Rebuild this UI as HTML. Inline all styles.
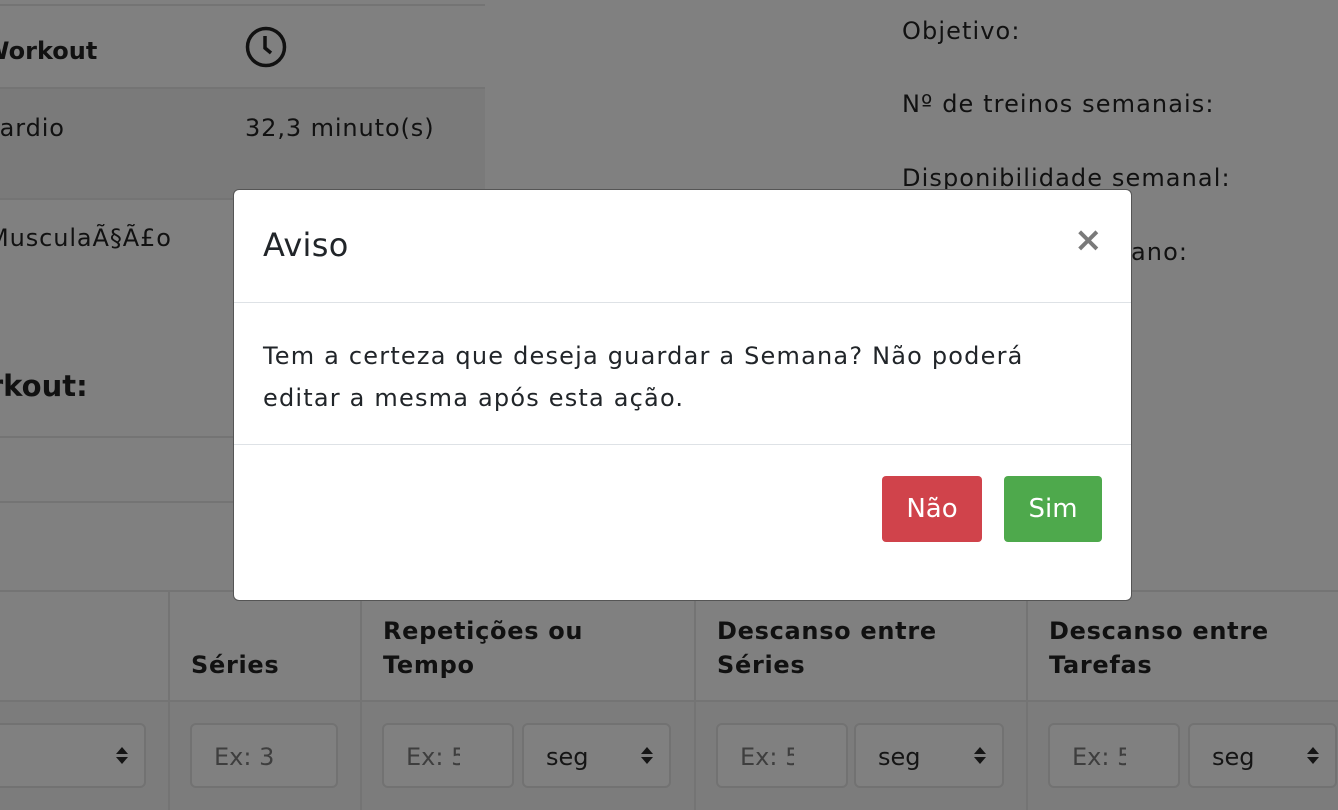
<!DOCTYPE html>
<html><head><meta charset="utf-8"><style>
*{margin:0;padding:0;box-sizing:border-box}
body{width:1338px;height:810px;overflow:hidden;background:#808080;font-family:"DejaVu Sans","Liberation Sans",sans-serif;color:#111;position:relative}
.a{position:absolute;white-space:nowrap}
.t{font-size:24px;color:#111;letter-spacing:0.9px}
.b{font-weight:bold}
.hl{position:absolute;height:2px;background:#747474}
.vl{position:absolute;width:2px;background:#747474}
.in{position:absolute;height:65px;border:2px solid #727272;border-radius:6px;background:#808080;font-size:24px;color:#3e3e3e;padding:18px 0 0 22px;overflow:hidden;white-space:nowrap}
.sel{color:#151515}
.arr{position:absolute;right:22px;top:22px;width:0;height:0}
.arr:before{content:"";position:absolute;left:-6px;top:0;border:6px solid transparent;border-bottom:7px solid #151515;border-top:0}
.arr:after{content:"";position:absolute;left:-6px;top:10px;border:6px solid transparent;border-top:7px solid #151515;border-bottom:0}
.h{font-size:24px;line-height:34px;font-weight:bold;letter-spacing:0.7px}
</style></head><body>
<div class="hl" style="left:0;top:4px;width:485px"></div>
<div class="a t b" style="left:-17px;top:37px;letter-spacing:0">Workout</div>
<svg class="a" style="left:244px;top:25px" width="44" height="44" viewBox="0 0 44 44"><circle cx="22" cy="22" r="18.5" fill="none" stroke="#111" stroke-width="3.5"/><path d="M21 11v12l6 5" fill="none" stroke="#111" stroke-width="3.5"/></svg>
<div class="a" style="left:0;top:88px;width:485px;height:110px;background:#7a7a7a"></div>
<div class="hl" style="left:0;top:87px;width:485px"></div>
<div class="a t" style="left:-18px;top:114px">Cardio</div>
<div class="a t" style="left:245px;top:114px">32,3 minuto(s)</div>
<div class="hl" style="left:0;top:198px;width:485px"></div>
<div class="a t" style="left:-12px;top:224px">MusculaÃ§Ã£o</div>
<div class="a b" style="left:-62px;top:369px;font-size:29px">Workout:</div>
<div class="hl" style="left:0;top:436px;width:485px"></div>
<div class="hl" style="left:0;top:501px;width:485px"></div>
<div class="a t" style="left:902px;top:17px;letter-spacing:1.1px">Objetivo:</div>
<div class="a t" style="left:902px;top:90px;letter-spacing:1.1px">Nº de treinos semanais:</div>
<div class="a t" style="left:902px;top:164px;letter-spacing:1.1px">Disponibilidade semanal:</div>
<div class="a t" style="left:902px;top:238px;letter-spacing:1.1px">Tempo por plano:</div>
<div class="a t" style="left:1131px;top:238px;letter-spacing:1.1px">ano:</div>

<div class="hl" style="left:0;top:590px;width:1338px"></div>
<div class="a" style="left:0;top:701px;width:1338px;height:109px;background:#7c7c7c"></div>
<div class="hl" style="left:0;top:700px;width:1338px"></div>
<div class="vl" style="left:168px;top:590px;height:220px"></div>
<div class="vl" style="left:360px;top:590px;height:220px"></div>
<div class="vl" style="left:694px;top:590px;height:220px"></div>
<div class="vl" style="left:1026px;top:590px;height:220px"></div>
<div class="a h" style="left:191px;top:648px">Séries</div>
<div class="a h" style="left:383px;top:614px">Repetições ou<br>Tempo</div>
<div class="a h" style="left:717px;top:614px">Descanso entre<br>Séries</div>
<div class="a h" style="left:1049px;top:614px">Descanso entre<br>Tarefas</div>
<div class="in sel" style="left:-10px;top:723px;width:156px"><span class="arr"></span></div>
<div class="in" style="left:190px;top:723px;width:148px">Ex: 3</div>
<div class="in" style="left:382px;top:723px;width:132px"><span style="display:inline-block;width:54px;overflow:hidden">Ex: 5</span></div>
<div class="in sel" style="left:522px;top:723px;width:149px">seg<span class="arr"></span></div>
<div class="in" style="left:716px;top:723px;width:132px"><span style="display:inline-block;width:54px;overflow:hidden">Ex: 5</span></div>
<div class="in sel" style="left:854px;top:723px;width:150px">seg<span class="arr"></span></div>
<div class="in" style="left:1048px;top:723px;width:132px"><span style="display:inline-block;width:54px;overflow:hidden">Ex: 5</span></div>
<div class="in sel" style="left:1188px;top:723px;width:149px">seg<span class="arr"></span></div>

<div class="a" style="left:233px;top:189px;width:899px;height:412px;background:#fff;border:1px solid #555;border-radius:6px">
  <div class="a" style="left:29px;top:36px;font-size:32px;color:#212529;letter-spacing:0.3px">Aviso</div>
  <div class="a" style="left:840px;top:30px;font-size:34px;font-weight:bold;color:#7a7a7a">×</div>
  <div class="a" style="left:0;top:112px;width:897px;height:1px;background:#dee2e6"></div>
  <div class="a" style="left:29px;top:145px;font-size:24px;line-height:42px;color:#212529;letter-spacing:1.2px">Tem a certeza que deseja guardar a Semana? Não poderá<br>editar a mesma após esta ação.</div>
  <div class="a" style="left:0;top:254px;width:897px;height:1px;background:#dee2e6"></div>
  <div class="a" style="left:648px;top:286px;width:100px;height:66px;background:#d0434b;border-radius:4px;color:#fff;font-size:26px;text-align:center;line-height:66px">Não</div>
  <div class="a" style="left:770px;top:286px;width:98px;height:66px;background:#4ea94c;border-radius:4px;color:#fff;font-size:26px;text-align:center;line-height:66px">Sim</div>
</div>
</body></html>
